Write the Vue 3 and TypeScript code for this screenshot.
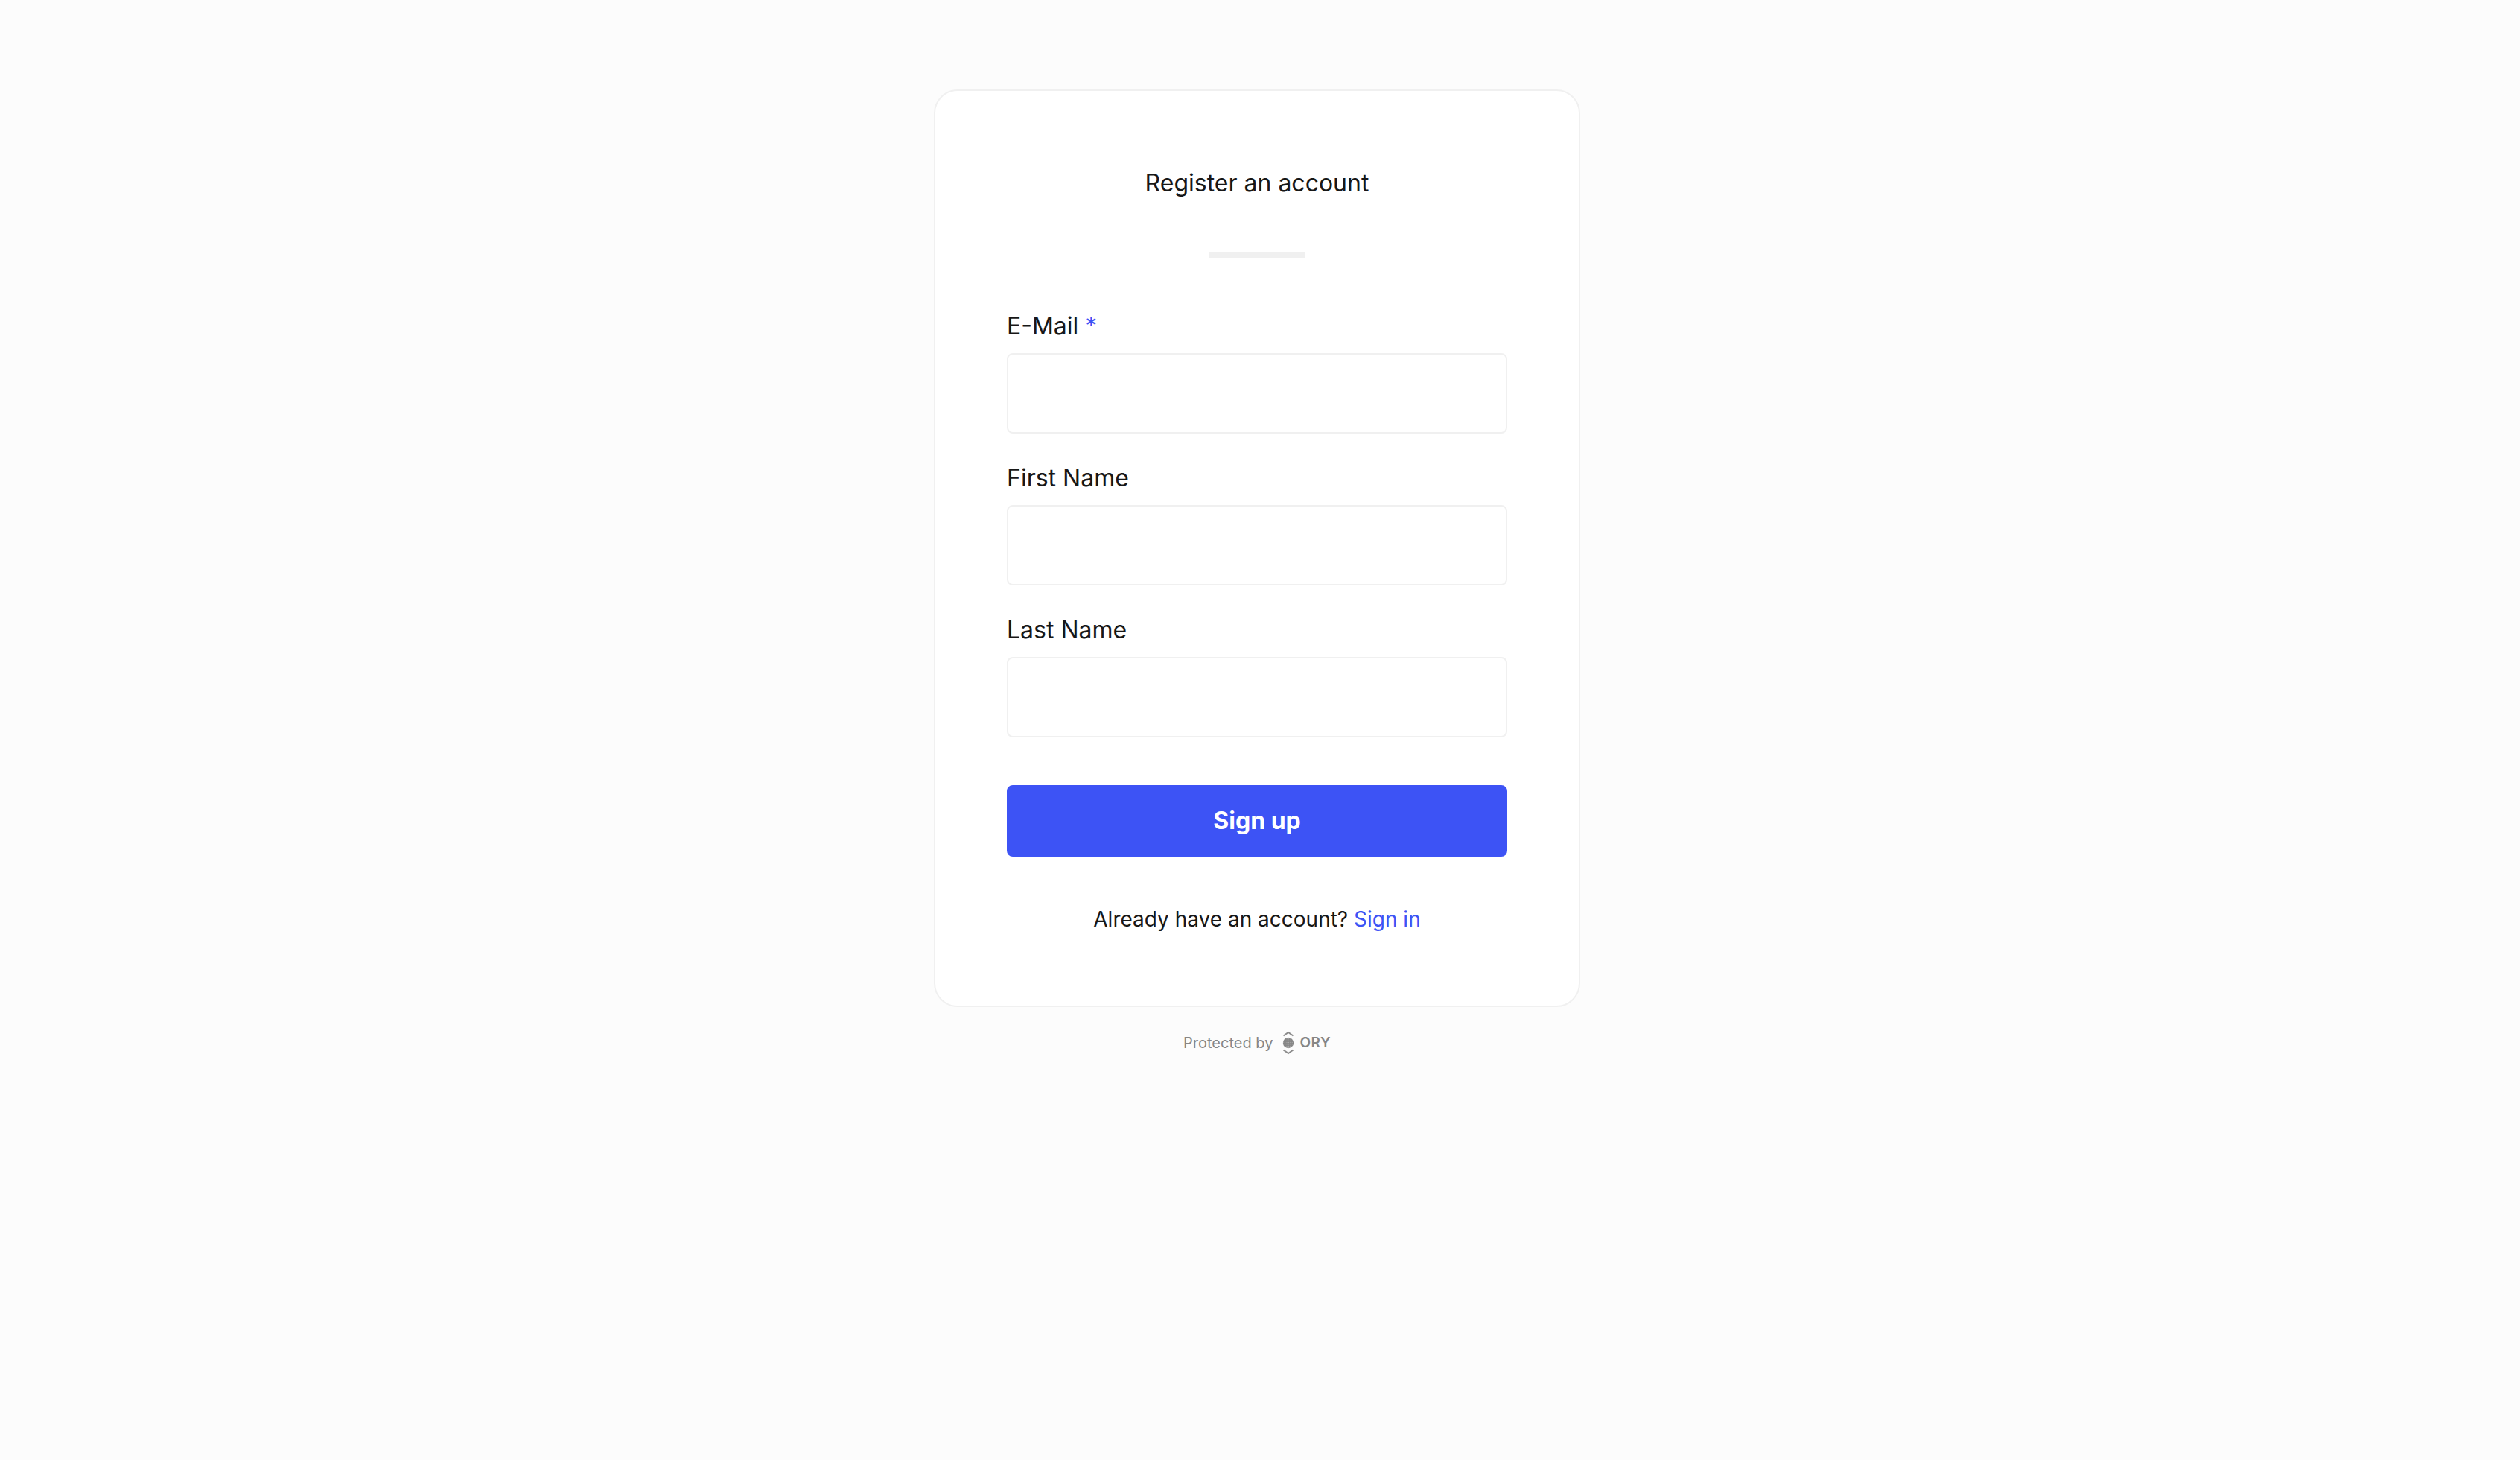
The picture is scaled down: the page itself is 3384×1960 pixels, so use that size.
<script setup lang="ts">
const fields = [
  { label: 'E-Mail', required: true },
  { label: 'First Name', required: false },
  { label: 'Last Name', required: false },
]
</script>

<template>
  <main class="page">
    <section class="card">
      <h1 class="title">Register an account</h1>
      <hr class="divider" />
      <form class="form" @submit.prevent>
        <div class="fields">
          <label v-for="f in fields" :key="f.label" class="field">
            <span class="label">{{ f.label }}<span v-if="f.required" class="req"> *</span></span>
            <input class="input" type="text" />
          </label>
        </div>
        <button class="submit" type="submit">Sign up</button>
      </form>
      <p class="switch">Already have an account? <a class="link" href="#">Sign in</a></p>
    </section>
    <footer class="footer">
      <span>Protected by</span>
      <span class="logo">
        <svg class="mark" viewBox="0 0 16 32" width="16" height="32" aria-hidden="true">
          <defs>
            <pattern id="dots" width="2.4" height="2.4" patternUnits="userSpaceOnUse">
              <rect width="2.4" height="2.4" fill="#868686" />
              <circle cx="1.2" cy="1.2" r="0.55" fill="#b4b4b4" />
            </pattern>
          </defs>
          <path d="M1.5 6.5 L8 2 L14.5 6.5" fill="none" stroke="#8c8c8c" stroke-width="2" />
          <circle cx="8" cy="16" r="7.2" fill="url(#dots)" />
          <path d="M1.5 25.5 L8 30 L14.5 25.5" fill="none" stroke="#8c8c8c" stroke-width="2" />
        </svg>
        <span class="word">ORY</span>
      </span>
    </footer>
  </main>
</template>

<style>
html, body { margin: 0; background: #fcfcfc; }
</style>

<style scoped>
.page {
  min-height: 1960px;
  box-sizing: border-box;
  padding: 120px 8px 0 0;
  display: flex;
  flex-direction: column;
  align-items: center;
  background: #fcfcfc;
  font-family: Inter, "Liberation Sans", sans-serif;
  color: #171717;
}
.card {
  width: 868px;
  height: 1232px;
  box-sizing: border-box;
  padding: 0 96px;
  background: #fff;
  border: 2px solid #f0f0f0;
  border-radius: 32px;
}
.title {
  margin: 0;
  padding-top: 100px;
  font-size: 32px;
  line-height: 48px;
  font-weight: 400;
  text-align: center;
}
.divider {
  width: 128px;
  height: 8px;
  margin: 68px auto 0;
  border: 0;
  background: #f0f0f0;
}
.form { margin-top: 68px; }
.fields { display: flex; flex-direction: column; gap: 36px; }
.field { display: flex; flex-direction: column; gap: 12px; }
.label { display: block; font-size: 32px; line-height: 48px; }
.req { color: #3d53f5; }
.input {
  display: block;
  width: 100%;
  height: 108px;
  box-sizing: border-box;
  background: #fff;
  border: 2px solid #f0f0f0;
  border-radius: 8px;
  outline: none;
}
.submit {
  display: block;
  width: 100%;
  height: 96px;
  margin-top: 64px;
  border: 0;
  border-radius: 8px;
  background: #3d53f5;
  color: #fff;
  font-family: inherit;
  font-size: 32px;
  font-weight: 700;
  line-height: 48px;
}
.switch {
  margin: 64px 0 0;
  font-size: 28px;
  line-height: 40px;
  text-align: center;
}
.link { color: #3d53f5; text-decoration: none; }
.footer {
  margin-top: 32px;
  display: flex;
  align-items: center;
  gap: 13px;
  font-size: 20px;
  line-height: 32px;
  color: #868686;
}
.logo { display: flex; align-items: center; gap: 7px; }
.mark { display: block; }
.word { font-size: 19px; font-weight: 600; letter-spacing: 0.5px; }
</style>
